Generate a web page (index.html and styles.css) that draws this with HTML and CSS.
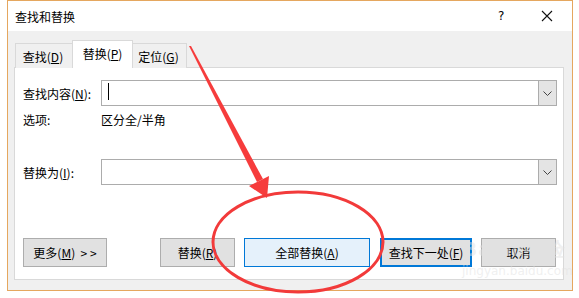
FILE: index.html
```html
<!DOCTYPE html>
<html>
<head>
<meta charset="utf-8">
<link rel="stylesheet" href="styles.css">
</head>
<body>
<div class="window">
  <div class="titlebar">
    <span class="title">查找和替换</span>
    <span class="help">?</span>
    <span class="close">
      <svg width="12" height="12" viewBox="0 0 12 12"><path d="M1 1 L11 11 M11 1 L1 11" stroke="#111" stroke-width="1.1"/></svg>
    </span>
  </div>
  <div class="body">
    <div class="tabs">
      <div class="tab t1">查找(<u>D</u>)</div>
      <div class="tab active">替换(<u>P</u>)</div>
      <div class="tab t3">定位(<u>G</u>)</div>
    </div>
    <div class="panel">
      <div class="row r1">
        <span class="label">查找内容(<u>N</u>):</span>
        <div class="combo"><span class="caret"></span><span class="drop"><svg width="9" height="5" viewBox="0 0 9 5"><path d="M0.5 0.5 L4.5 4.5 L8.5 0.5" fill="none" stroke="#444" stroke-width="1"/></svg></span></div>
      </div>
      <div class="row opts">
        <span class="label">选项:</span>
        <span class="val">区分全/半角</span>
      </div>
      <div class="row r2">
        <span class="label">替换为(<u>I</u>):</span>
        <div class="combo"><span class="drop"><svg width="9" height="5" viewBox="0 0 9 5"><path d="M0.5 0.5 L4.5 4.5 L8.5 0.5" fill="none" stroke="#444" stroke-width="1"/></svg></span></div>
      </div>
      <div class="buttons">
        <button class="btn more">更多(<u>M</u>)&nbsp;&nbsp;&gt; &gt;</button>
        <button class="btn rep">替换(<u>R</u>)</button>
        <button class="btn all">全部替换(<u>A</u>)</button>
        <button class="btn next">查找下一处(<u>F</u>)</button>
        <button class="btn cancel">取消</button>
      </div>
    </div>
  </div>
</div>
<div class="watermark">
  <span class="wm1">Bai<span class="paw">du</span>经验</span>
  <span class="wm2">jingyan.baidu.com</span>
</div>
<svg class="annot" width="579" height="298" viewBox="0 0 579 298">
  <polygon points="189,46 191,46 263,179 257,182" fill="#f63c3c"/>
  <polygon points="249,186 269,176 267,198" fill="#f63c3c"/>
  <ellipse cx="298" cy="242" rx="85" ry="50" fill="none" stroke="#f23a3a" stroke-width="3"/>
</svg>
</body>
</html>
```
FILE: styles.css
```css
* { box-sizing: border-box; }
html, body { margin: 0; padding: 0; background: #fff; }
body {
  width: 579px; height: 298px; position: relative; overflow: hidden;
  font-family: "Noto Sans CJK SC", "Noto Sans", sans-serif;
  font-size: 12px; color: #000;
}
u { text-decoration: underline; text-underline-offset: 1px; }
.window {
  margin-left: 7px;
  width: 566px; height: 291px;
  border: 1px solid #e5a75f;
  display: flex; flex-direction: column;
  background: #f0f0f0;
}
.titlebar {
  height: 30px; background: #fff;
  display: flex; align-items: center;
  padding-left: 7px;
}
.title { flex: 1; font-size: 12px; }
.help { width: 12px; margin-right: 31px; font-family: "DejaVu Sans", sans-serif; font-size: 12px; }
.close { width: 12px; height: 12px; margin-right: 19px; display: flex; }
.body {
  flex: 1;
  padding: 9px 8px 10px 6px;
  display: flex; flex-direction: column;
}
.tabs {
  display: flex; align-items: flex-end;
  margin-left: 1px; margin-bottom: -1px;
  position: relative; z-index: 1;
}
.tab {
  border: 1px solid #d9d9d9; border-bottom: none;
  height: 25px; display: flex; align-items: center; justify-content: center;
  background: #f0f0f0;
}
.t1 { width: 57px; border-right: none; padding-right: 2px; }
.active { width: 61px; height: 28px; background: #fff; padding-bottom: 2px; }
.t3 { width: 54px; border-left: none; padding-right: 2px; }
.panel {
  flex: 1;
  background: #fff; border: 1px solid #d9d9d9;
  padding: 12px 6px 12px 8px;
  display: flex; flex-direction: column;
}
.row { display: flex; align-items: center; }
.label { width: 78px; }
.combo {
  width: 456px; height: 26px;
  border: 1px solid #acacac; background: #fff;
  display: flex; justify-content: flex-end; position: relative;
}
.caret {
  position: absolute; left: 6px; top: 2px;
  width: 1px; height: 17px; background: #000;
}
.drop {
  width: 18px; height: 24px;
  background: #e4e4e4; border-left: 1px solid #acacac;
  display: flex; align-items: center; justify-content: center;
}
.opts { height: 26px; }
.r2 { margin-top: 27px; }
.buttons {
  margin-top: auto;
  display: flex; align-items: center;
}
.btn {
  height: 29px;
  font-family: "Noto Sans CJK SC", "Noto Sans", sans-serif;
  font-size: 12px; color: #000;
  background: #e1e1e1; border: 1px solid #adadad;
  padding: 0; margin: 0;
}
.more { width: 84px; }
.rep { width: 75px; margin-left: 53px; }
.all { width: 126px; margin-left: 9px; background: #e5f1fb; border-color: #0078d7; }
.next { width: 92px; margin-left: 10px; border: 2px solid #0078d7; }
.cancel { width: 75px; margin-left: 9px; }
.watermark {
  position: absolute; left: 462px; top: 236px;
  display: flex; flex-direction: column;
  color: rgba(225, 225, 225, 0.5);
  font-family: "DejaVu Sans", sans-serif; font-weight: bold;
  pointer-events: none;
}
.wm1 { font-size: 20px; line-height: 26px; letter-spacing: 1px; }
.paw { font-size: 15px; }
.wm2 { font-size: 12px; line-height: 14px; font-weight: normal; }
.annot { position: absolute; left: 0; top: 0; pointer-events: none; }
```
